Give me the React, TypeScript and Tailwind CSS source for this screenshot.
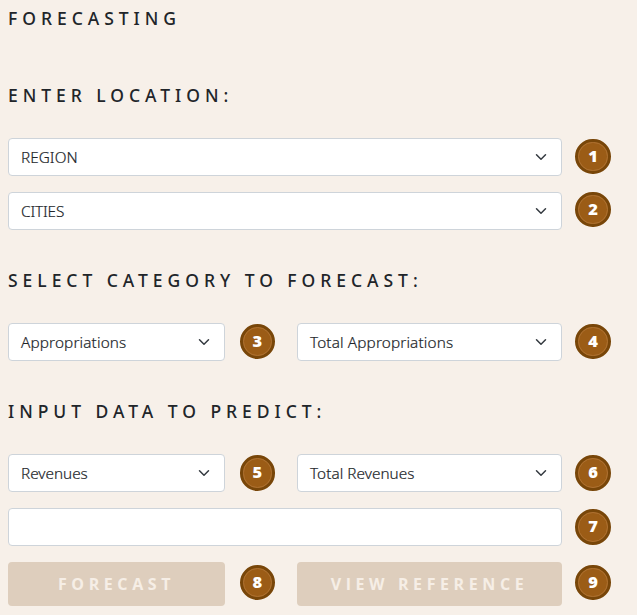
import type { ReactNode } from "react";

const font = "font-['Segoe_UI','Open_Sans','Noto_Sans',sans-serif]";

function Heading({ children }: { children: ReactNode }) {
  return (
    <h2 className="h-6 whitespace-nowrap font-['Noto_Sans',sans-serif] text-[17.5px] font-medium leading-6 tracking-[4.97px] text-[#212529]">
      {children}
    </h2>
  );
}

function Select({ label, className, text = "tracking-[0.14px]" }: { label: string; className: string; text?: string }) {
  return (
    <button
      type="button"
      className={`flex h-[38px] shrink-0 items-center justify-between rounded border border-[#ced4da] bg-white px-3 text-[#212529] ${className}`}
    >
      <span className={`whitespace-nowrap font-['Noto_Sans',sans-serif] text-[15.3px] font-light leading-6 [-webkit-text-stroke:0.2px] ${text}`}>{label}</span>
      <svg className="h-3 w-4" viewBox="0 0 16 16" fill="none" stroke="#343a40" strokeWidth="2" strokeLinecap="round" strokeLinejoin="round">
        <path d="m2 5 6 6 6-6" />
      </svg>
    </button>
  );
}

function Badge({ n, className }: { n: number; className: string }) {
  return (
    <span className={`flex size-[35.4px] shrink-0 items-center justify-center rounded-full border-[3px] border-[#784609] bg-[#9b5c16] ${className}`}>
      <span className="flex size-[29.4px] shrink-0 items-center justify-center rounded-full border border-[#ad7132] pb-px text-[16.5px] font-extrabold leading-none text-white">
        {n}
      </span>
    </span>
  );
}

function Action({ label, className }: { label: string; className: string }) {
  return (
    <button type="button" disabled className={`h-11 shrink-0 whitespace-nowrap rounded bg-[#decebd] text-center text-[16px] font-bold leading-[44px] tracking-[4.6px] text-[#f6eee6] ${className}`}>
      {label}
    </button>
  );
}

export default function App() {
  return (
    <main className={`h-[615px] w-[637px] overflow-hidden bg-[#f7f0e9] pl-2 pt-1.5 ${font}`}>
      <Heading>FORECASTING</Heading>
      <div className="mt-[53px]">
        <Heading>ENTER LOCATION:</Heading>
      </div>
      <div className="mt-[31px] flex">
        <Select label="REGION" className="w-[554px]" text="tracking-[0.05px]" />
        <Badge n={1} className="ml-[13.3px] mt-px" />
      </div>
      <div className="mt-4 flex">
        <Select label="CITIES" className="w-[554px]" text="tracking-[-0.15px]" />
        <Badge n={2} className="ml-[13.3px]" />
      </div>
      <div className="mt-[38px]">
        <Heading>SELECT CATEGORY TO FORECAST:</Heading>
      </div>
      <div className="mt-[31px] flex">
        <Select label="Appropriations" className="w-[217px]" />
        <Badge n={3} className="ml-[14.6px] mt-[0.8px]" />
        <Select label="Total Appropriations" className="ml-[22px] w-[265px]" />
        <Badge n={4} className="ml-[13.3px] mt-[0.8px]" />
      </div>
      <div className="mt-[38px]">
        <Heading>INPUT DATA TO PREDICT:</Heading>
      </div>
      <div className="mt-[31px] flex">
        <Select label="Revenues" className="w-[217px]" text="tracking-[0px]" />
        <Badge n={5} className="ml-[14.6px] mt-[1.4px]" />
        <Select label="Total Revenues" className="ml-[22px] w-[265px]" text="tracking-[0.05px]" />
        <Badge n={6} className="ml-[13.3px] mt-[1.4px]" />
      </div>
      <div className="mt-4 flex">
        <input aria-label="Value" className="h-[38px] w-[554px] rounded border border-[#ced4da] bg-white px-3" />
        <Badge n={7} className="ml-[13.3px] mt-[1.4px]" />
      </div>
      <div className="mt-4 flex">
        <Action label="FORECAST" className="w-[217px]" />
        <Badge n={8} className="ml-[14.6px] mt-[2.8px]" />
        <Action label="VIEW REFERENCE" className="ml-[22px] w-[265px]" />
        <Badge n={9} className="ml-[13.3px] mt-[2.8px]" />
      </div>
    </main>
  );
}
